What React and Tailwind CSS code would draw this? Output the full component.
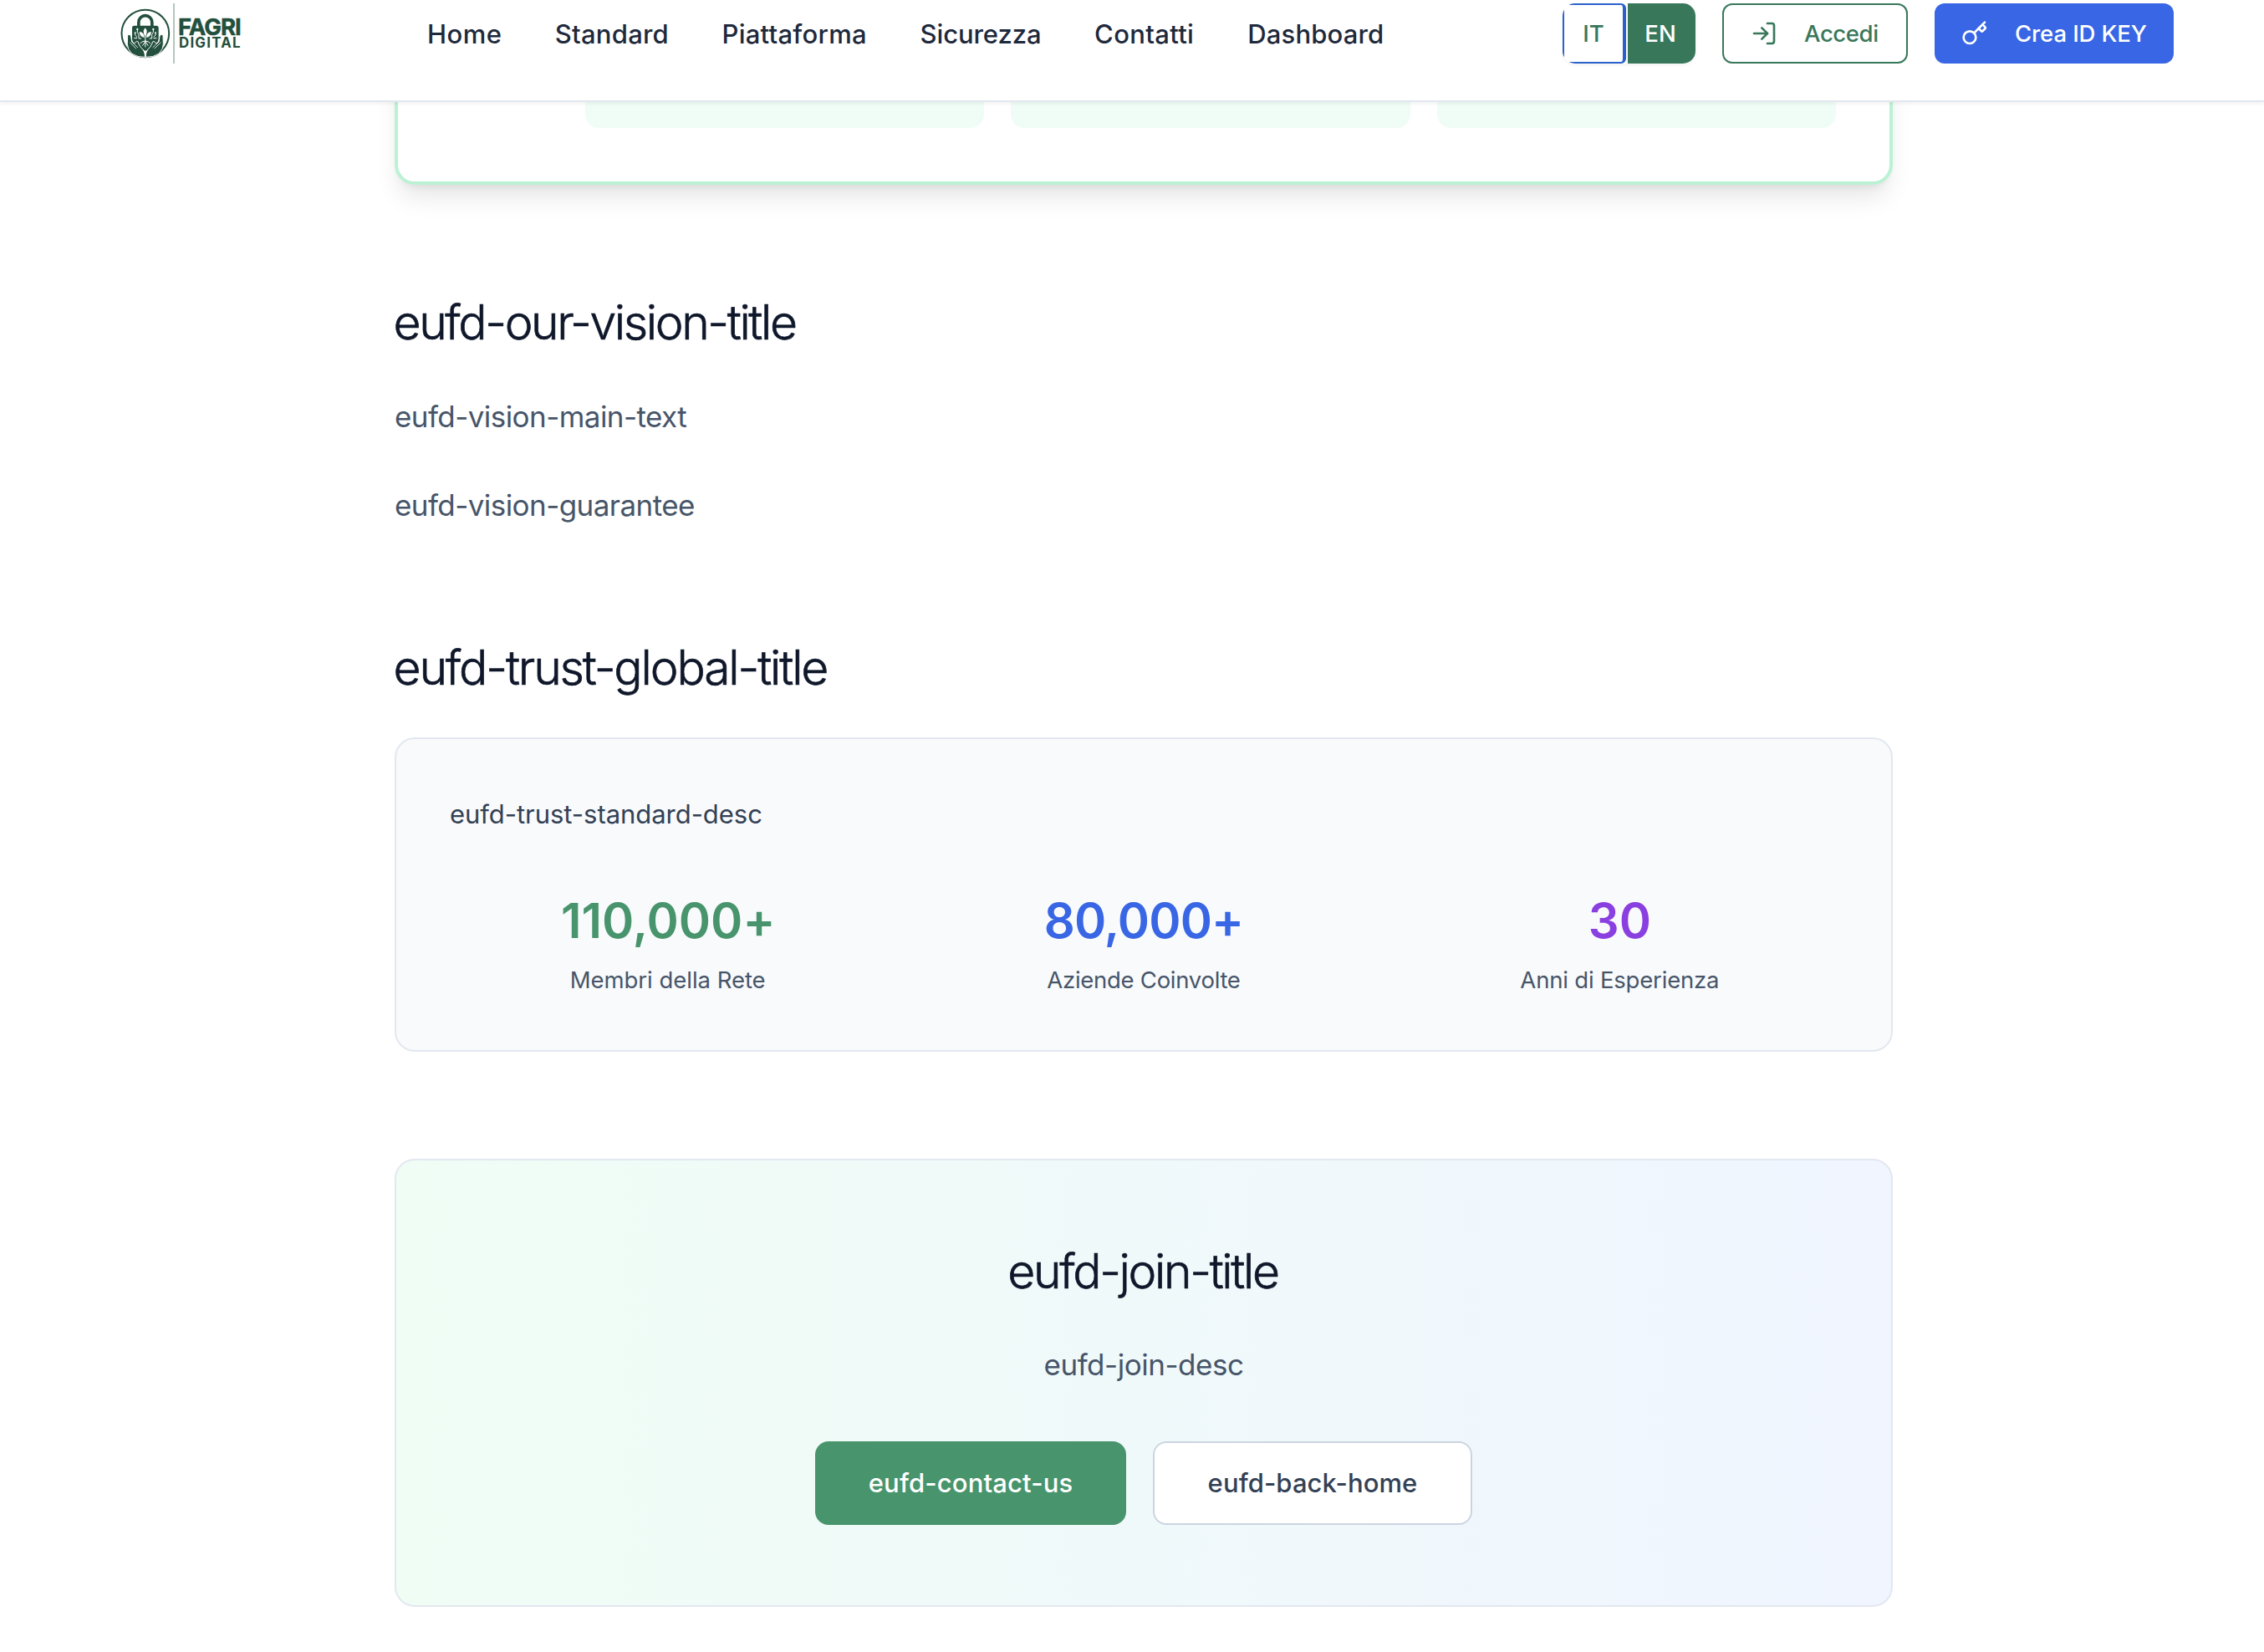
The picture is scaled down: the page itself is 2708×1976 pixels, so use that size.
import { LogIn, Key } from "lucide-react";

const navLinks = [
  { label: "Home", cls: "w-[88.8px] tracking-[0.5px]" },
  { label: "Standard", cls: "w-[135.7px] tracking-[0.24px]" },
  { label: "Piattaforma", cls: "w-[173px] tracking-[0.26px]" },
  { label: "Sicurezza", cls: "w-[144.6px] tracking-[-0.08px]" },
  { label: "Contatti", cls: "w-[119.2px] tracking-[0.33px]" },
  { label: "Dashboard", cls: "w-[163px] tracking-[0.16px]" },
];

const stats = [
  { value: "110,000+", label: "Membri della Rete", color: "text-[#48946c] pl-[1px] tracking-[0.02px]", labelCls: "tracking-[-0.03px]" },
  { value: "80,000+", label: "Aziende Coinvolte", color: "text-[#3866e4] tracking-[-0.86px]", labelCls: "tracking-[-0.28px]" },
  { value: "30", label: "Anni di Esperienza", color: "text-[#8a3fe0] tracking-[0.09px]", labelCls: "tracking-[-0.19px]" },
];

function LogoMark() {
  return (
    <svg viewBox="72 30 180 180" className="h-[60px] w-[60px]" fill="none">
      <circle cx="161.5" cy="120" r="85" stroke="#234f3d" strokeWidth="6" />
      <path d="M137.500 98V80a24 24 0 0 1 48 0V98" stroke="#234f3d" strokeWidth="11" />
      <path
        d="M122 92H201Q209 92 209 100V138Q209 154 196 160L162 184L128 160Q114 154 114 138V100Q114 92 122 92Z"
        fill="#234f3d"
      />
      {/* seedling and roots */}
      <g fill="#fff">
        <path d="M161 100Q173 113 161 131Q149 113 161 100Z" />
        <path d="M140 114Q158 115 158 135Q141 132 140 114Z" />
        <path d="M183 114Q165 115 165 135Q182 132 183 114Z" />
      </g>
      <g stroke="#fff" strokeWidth="3" strokeLinecap="round">
        <path d="M161.500 122V168M161.500 147Q150 147 144 155M161.500 147Q173 147 179 155M161.500 149L152 163M161.500 149L171 163" />
        <path d="M133 106V116L138 124V138H146M125 120V126L131 132M122 137H131M190 106V116L185 124V138H177M198 120V126L192 132M201 137H192" />
      </g>
      <g fill="#fff">
        <circle cx="133" cy="105" r="3.500" />
        <circle cx="190" cy="105" r="3.500" />
        <circle cx="125" cy="118" r="3" />
        <circle cx="198" cy="118" r="3" />
      </g>
      {/* cupped hands */}
      <g fill="#234f3d" stroke="#fff" strokeWidth="3" strokeLinejoin="round">
        <path d="M98 125Q107 121 110 130L113 150L122 156L131 148Q138 149 137 156L145 170Q160 180 161 205Q134 207 112 192Q97 176 97 158Z" />
        <path d="M225 125Q216 121 213 130L210 150L201 156L192 148Q185 149 186 156L178 170Q163 180 162 205Q189 207 211 192Q226 176 226 158Z" />
      </g>
      <g stroke="#fff" strokeWidth="2.500" strokeLinecap="round">
        <path d="M107 153L128 174M116 153L134 170M216 153L195 174M207 153L189 170" />
      </g>
      <path d="M161.500 182V203" stroke="#fff" strokeWidth="5" />
    </svg>
  );
}

function Header() {
  return (
    <header className="relative z-10 h-[122px] border-b-2 border-[#e2e8f0] bg-white pt-1 shadow-[0_2px_4px_rgba(0,0,0,0.06)]">
      <div className="flex h-[72px] items-center pl-[144px] pr-[108px]">
        <div className="flex w-[367px] items-center">
          <LogoMark />
          <div className="ml-[3px] h-[72px] w-[2px] bg-[#b4c6bd]" />
          <div className="ml-[4px] text-[#234f3d]">
            <div className="text-[27.5px] font-bold leading-[22px] tracking-[-0.9px] [-webkit-text-stroke:0.5px_#234f3d]">FAGRI</div>
            <div className="pl-[1px] pt-[1px] text-[16.8px] font-bold leading-[15px] tracking-[1.27px]">DIGITAL</div>
          </div>
        </div>
        <nav className="flex gap-16 pt-px text-[31px] font-medium leading-[48px] text-[#1e293b]">
          {navLinks.map((link) => (
            <a key={link.label} className={`whitespace-nowrap ${link.cls}`}>{link.label}</a>
          ))}
        </nav>
        <div className="ml-auto flex gap-8 text-[27.5px] font-medium leading-[40px]">
          <div className="flex h-[72px] w-[159px] gap-[2px] overflow-hidden rounded-[15px] shadow-[0_2px_4px_rgba(0,0,0,0.05)]">
            <button className="w-[76px] rounded-r-[6px] border-2 border-r-4 border-[#2a60cb] bg-white text-[#38775a]">IT</button>
            <button className="flex-1 bg-[#38775a] pr-[3px] text-white">EN</button>
          </div>
          <button className="flex h-[72px] w-[222px] items-center rounded-[12px] border-2 border-[#38775a] bg-white pl-8 text-[#38775a]">
            <LogIn size={32} strokeWidth={2} />
            <span className="ml-8 tracking-[-0.4px]">Accedi</span>
          </button>
          <button className="flex h-[72px] w-[286px] items-center rounded-[12px] bg-[#3866e4] pl-8 text-white">
            <Key size={32} strokeWidth={2} />
            <span className="ml-8 whitespace-nowrap tracking-[-0.1px]">Crea ID KEY</span>
          </button>
        </div>
      </div>
    </header>
  );
}

export default function App() {
  return (
    <div className="h-[1976px] overflow-hidden bg-white font-['Inter',sans-serif]">
      <Header />
      <main className="ml-[472px] w-[1792px]">
        <section className="-mt-16 mb-32 rounded-[24px] border-4 border-[#bbf2d3] bg-white pb-16 pl-[224px] pr-16 shadow-[0_20px_30px_-6px_rgba(0,0,0,0.1),0_8px_12px_-8px_rgba(0,0,0,0.1)]">
          <div className="grid grid-cols-3 gap-8">
            <div className="h-[91px] rounded-b-[16px] bg-[#f0fdf6]" />
            <div className="h-[91px] rounded-b-[16px] bg-[#f0fdf6]" />
            <div className="h-[91px] rounded-b-[16px] bg-[#f0fdf6]" />
          </div>
        </section>

        <section className="mb-[129px] text-[35px] leading-[58px] tracking-[-0.56px] text-[#475569]">
          <h2 className="-ml-[1.5px] mb-[46px] text-[57px] font-light leading-[74px] tracking-[-2.37px] text-[#0f172a] [-webkit-text-stroke:0.7px_#0f172a]">eufd-our-vision-title</h2>
          <p className="mb-12">eufd-vision-main-text</p>
          <p>eufd-vision-guarantee</p>
        </section>

        <section className="mb-32">
          <h2 className="-ml-[1.5px] mb-[46px] text-[57px] font-light leading-[74px] tracking-[-2.12px] text-[#0f172a] [-webkit-text-stroke:0.7px_#0f172a]">eufd-trust-global-title</h2>
          <div className="rounded-[24px] border-2 border-[#e2e8f0] bg-[#f8fafc] p-16">
            <p className="text-[31px] leading-[52px] tracking-[-0.04px] text-[#334155]">eufd-trust-standard-desc</p>
            <div className="mt-[65px] grid grid-cols-3 gap-12 text-center">
              {stats.map((s) => (
                <div key={s.label}>
                  <div className={`text-[58px] font-semibold leading-[72px] ${s.color}`}>{s.value}</div>
                  <div className={`mt-[15px] text-[27.5px] leading-[40px] text-[#475569] ${s.labelCls}`}>{s.label}</div>
                </div>
              ))}
            </div>
          </div>
        </section>

        <section className="h-[536px] rounded-[24px] border-2 border-[#e2e8f0] bg-gradient-to-r from-[#f0fdf5] to-[#f0f5ff] pt-24 text-center">
          <h2 className="pr-[2px] text-[57px] font-light leading-[74px] tracking-[-2.34px] text-[#0f172a] [-webkit-text-stroke:0.7px_#0f172a]">eufd-join-title</h2>
          <p className="mt-[45px] text-[35px] leading-[58px] tracking-[-0.47px] text-[#475569]">eufd-join-desc</p>
          <div className="mt-[63px] flex justify-center gap-8 text-[31px] font-medium">
            <button className="h-[100px] w-[372px] rounded-[16px] bg-[#48946c] tracking-[0.14px] text-white">eufd-contact-us</button>
            <button className="h-[100px] w-[382px] rounded-[16px] border-2 border-[#cbd5e1] bg-white tracking-[0.09px] text-[#334155]">eufd-back-home</button>
          </div>
        </section>
      </main>
    </div>
  );
}
